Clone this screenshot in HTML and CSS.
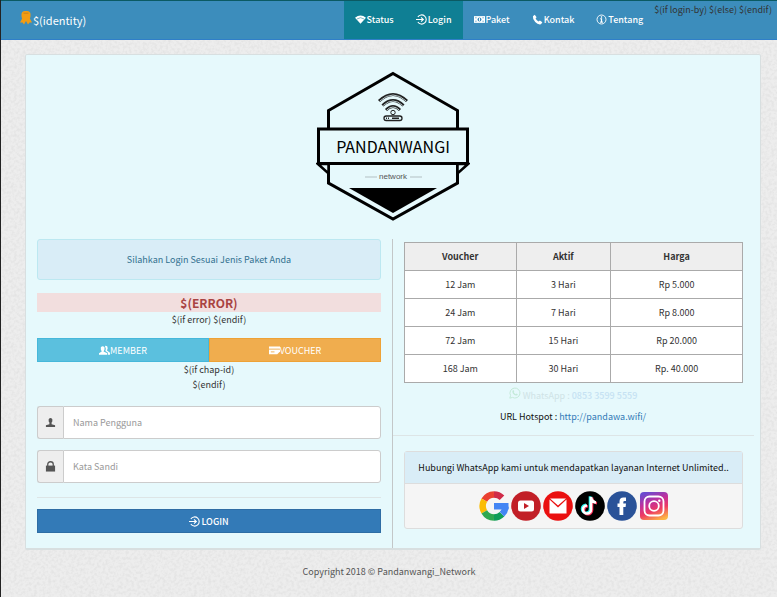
FILE: index.html
```html
<!DOCTYPE html>
<html lang="id">
<head>
<meta charset="utf-8">
<meta name="viewport" content="width=device-width, initial-scale=1">
<title>Pandanwangi Network</title>
<link rel="stylesheet" href="styles.css">
</head>
<body>
<svg class="sprite" aria-hidden="true">
  <symbol id="i-login" viewBox="0 0 12 12"><path d="M2 3.200A5 5 0 1 1 2 8.800M0 6h7.800M5.500 3.600 8 6 5.500 8.400" fill="none" stroke="currentColor" stroke-width="1.200"/></symbol>
</svg>
<header class="navbar">
  <a class="brand" href="#">
    <svg class="brand-icon" viewBox="0 0 12 14" aria-hidden="true"><path d="M3 6 0 11.500 2.500 11.500 4 13.500 6 10 8 13.500 9.500 11.500 12 11.500 9 6z" fill="#f39c12"/><rect x="1.500" y="0" width="9" height="8.500" rx="3.500" fill="#f39c12"/><path d="M3.500 2.200h5" stroke="#c9821c" stroke-width="1"/></svg>
    <span>$(identity)</span>
  </a>
  <nav class="menu">
    <a class="active" href="#"><svg class="icon" viewBox="0 0 12 12" aria-hidden="true"><path d="M0 4Q6-1 12 4L6 10.500z" fill="currentColor"/><path d="M2 5.500Q6 2.500 10 5.500" fill="none" stroke="#0f7f94" stroke-width=".6"/></svg>Status</a>
    <a class="active" href="#"><svg class="icon" aria-hidden="true"><use href="#i-login"/></svg>Login</a>
    <a href="#"><svg class="icon" viewBox="0 0 13 12" aria-hidden="true"><path d="M0 2h13v8H0z" fill="currentColor"/><circle cx="6.500" cy="6" r="2.300" fill="#3c8dbc"/><path d="M6.500 4.400v3.200" stroke="#fff" stroke-width="1.200"/><path d="M1.500 4h1.500M10 4h1.500M1.500 8h1.500M10 8h1.500" stroke="#3c8dbc"/></svg>Paket</a>
    <a href="#"><svg class="icon" viewBox="0 0 12 12" aria-hidden="true"><path d="M1 2.500 3 .8 5 3.600 3.900 5Q5 7.300 7.200 8.200L8.600 7.200 11.300 9 9.800 11.200Q6.500 12 3.500 8.700 .5 5.500 1 2.500z" fill="currentColor"/></svg>Kontak</a>
    <a href="#"><svg class="icon" viewBox="0 0 12 12" aria-hidden="true"><circle cx="6" cy="6" r="4.900" fill="none" stroke="currentColor"/><path d="M6 2.500v1.500M4.600 5.200H6v3.600M4.500 8.900h3" fill="none" stroke="currentColor" stroke-width="1.300"/></svg>Tentang</a>
  </nav>
  <span class="session">$(if login-by) $(else) $(endif)</span>
</header>

<main class="card">
  <svg class="logo" viewBox="0 0 154 152" role="img" aria-label="Pandanwangi network">
    <path d="M77 3.500 141.500 40.500V113L77 149 12.500 113V40.500z" fill="none" stroke="#000" stroke-width="3"/>
    <path d="M2 94h10.500v9.500zM152 94h-10.500v9.500z" fill="#e6f9fc" stroke="#000" stroke-width="2.500"/>
    <rect x="2.500" y="59" width="149" height="34.500" fill="#e6f9fc" stroke="#000" stroke-width="3"/>
    <path d="M33 118h88L77 143z"/>
    <g fill="none" stroke="#222" stroke-width="3"><path d="M63 31Q77 18 91 31"/><path d="M66.500 35.500Q77 25.500 87.500 35.500"/><path d="M70 40Q77 33 84 40"/></g>
    <g fill="none" stroke="#b9c8cb" stroke-width="1"><path d="M63.800 31Q77 19 90.200 31"/><path d="M67.300 35.500Q77 26.500 86.700 35.500"/><path d="M70.800 40Q77 34 83.200 40"/></g>
    <circle cx="77" cy="42.500" r="2.200" fill="#e6f9fc" stroke="#222"/>
    <rect x="68" y="46" width="18" height="4.500" rx="2.200" fill="none" stroke="#222" stroke-width="1.300"/>
    <path d="M70 48.300h1M72 48.300h1M76 48.300h7" stroke="#222" stroke-width="1.500"/>
    <text class="logo-name" x="77" y="83">PANDANWANGI</text>
    <path d="M49 107h12M94 107h12" stroke="#b3c0c3"/>
    <text class="logo-sub" x="77" y="109">network</text>
  </svg>

  <div class="columns">
    <section class="login">
      <p class="alert">Silahkan Login Sesuai Jenis Paket Anda</p>
      <h1 class="error">$(ERROR)</h1>
      <p class="note">$(if error) $(endif)</p>
      <div class="tabs">
        <button type="button" class="tab member"><svg class="icon" viewBox="0 0 12 12" aria-hidden="true"><path d="M2 2.500Q4 0 6 2.500V5L5 7l4 2v1.500H0V9l3-2-1-2z" fill="currentColor"/><path d="M6.500 1Q9.500 .5 9.500 3.500L8.700 6 12 8.500v2H9.800V8.500L7 6.500 7.500 4z" fill="currentColor"/></svg>MEMBER</button><button type="button" class="tab voucher"><svg class="icon" viewBox="0 0 12 12" aria-hidden="true"><path d="M0 1.500h12V7L9 10H0z" fill="currentColor"/><path d="M0 4.500h12M2 7.500h4" stroke="#f0ad4e"/></svg>VOUCHER</button>
      </div>
      <p class="note">$(if chap-id)<br>$(endif)</p>
      <form class="form">
        <div class="field">
          <label for="user" aria-label="Nama Pengguna"><svg class="icon" viewBox="0 0 12 12" aria-hidden="true"><path d="M4 2.500Q6-.5 8 2.500V5L7.200 6v2L11 9v2H1V9l3.800-1V6L4 5z" fill="currentColor"/></svg></label>
          <input id="user" type="text" placeholder="Nama Pengguna">
        </div>
        <div class="field">
          <label for="pass" aria-label="Kata Sandi"><svg class="icon" viewBox="0 0 12 12" aria-hidden="true"><path d="M1 5h10v6.500H1z" fill="currentColor"/><path d="M3 5.500V3.500Q3 .8 6 .8t3 2.700v2" fill="none" stroke="currentColor" stroke-width="1.400"/></svg></label>
          <input id="pass" type="password" placeholder="Kata Sandi">
        </div>
        <hr>
        <button type="submit" class="submit"><svg class="icon" aria-hidden="true"><use href="#i-login"/></svg>LOGIN</button>
      </form>
    </section>

    <section class="info">
      <table class="prices">
        <thead><tr><th class="c1">Voucher</th><th class="c2">Aktif</th><th>Harga</th></tr></thead>
        <tbody>
          <tr><td>12 Jam</td><td>3 Hari</td><td>Rp 5.000</td></tr>
          <tr><td>24 Jam</td><td>7 Hari</td><td>Rp 8.000</td></tr>
          <tr><td>72 Jam</td><td>15 Hari</td><td>Rp 20.000</td></tr>
          <tr><td>168 Jam</td><td>30 Hari</td><td>Rp. 40.000</td></tr>
        </tbody>
      </table>
      <p class="whatsapp"><svg viewBox="0 0 12 12" aria-hidden="true"><path d="M.8 11.200 1.600 8.500A5 5 0 1 1 3.500 10.400z" fill="none" stroke="#c4ead9"/><path d="M3.800 3.200 4.800 3.300 5.200 4.600 4.800 5.300Q5.500 6.700 6.800 7.200L7.500 6.500 8.800 7.200Q8.500 8.900 6.800 8.500 3.600 7.500 3.300 4.500z" fill="#c4ead9"/></svg> <span>WhatsApp : <a href="#">0853 3599 5559</a></span></p>
      <p class="url">URL Hotspot : <a href="#">http://pandawa.wifi/</a></p>
      <hr>
      <div class="panel">
        <h2>Hubungi WhatsApp kami untuk mendapatkan layanan Internet Unlimited..</h2>
        <div class="social">
          <a href="#" aria-label="Google"><svg viewBox="0 0 30 30"><g fill="none" stroke-width="6.500"><path d="M5.300 9.200A11.500 11.500 0 0 1 15 3.500" stroke="#ea4030"/><path d="M15 3.500A11.500 11.500 0 0 1 23 6.800" stroke="#d02a48"/><path d="M5.300 9.200A11.500 11.500 0 0 0 5.300 20.800" stroke="#fbbc05"/><path d="M5.300 20.800A11.500 11.500 0 0 0 15 26.500" stroke="#2fa850"/><path d="M15 26.500A11.500 11.500 0 0 0 23 23.200" stroke="#109d58"/><path d="M23 23.200A11.500 11.500 0 0 0 26.500 15.500" stroke="#4285f4"/></g><path d="M15 12h14.500v6.500H15z" fill="#4285f4"/></svg></a>
          <a href="#" aria-label="YouTube"><svg viewBox="0 0 30 30"><circle cx="15" cy="15" r="14.800" fill="#c21f27"/><rect x="7" y="9.500" width="16" height="11" rx="2.500" fill="#fff"/><path d="M13 12v6l5-3z" fill="#c21f27"/></svg></a>
          <a href="#" aria-label="Gmail"><svg viewBox="0 0 30 30"><circle cx="15" cy="15" r="14.800" fill="#ea1010"/><path d="M7 7.500h16L15 14.500zM6.500 8.500 15 16.500l8.500-8V22.500h-17z" fill="#fff"/></svg></a>
          <a href="#" aria-label="TikTok"><svg viewBox="0 0 30 30"><circle cx="15" cy="15" r="14.800"/><g fill="none" stroke-width="2.600"><path d="M16 6v12.500a4 4 0 1 1-4-4M16 6q.5 5 5 5.500" stroke="#25f4ee" transform="translate(-1 -.7)"/><path d="M16 6v12.500a4 4 0 1 1-4-4M16 6q.5 5 5 5.500" stroke="#fe2c55" transform="translate(1 .7)"/><path d="M16 6v12.500a4 4 0 1 1-4-4M16 6q.5 5 5 5.500" stroke="#fff"/></g></svg></a>
          <a href="#" aria-label="Facebook"><svg viewBox="0 0 30 30"><circle cx="15" cy="15" r="14.800" fill="#2a5298"/><path d="M12.500 24V16H10.500V12.500h2V10.500Q12.500 6.500 16.500 6.500H19V10h-1.500Q16.300 10 16.300 11.300v1.200H19L18.600 16h-2.300v8z" fill="#fff"/></svg></a>
          <a href="#" aria-label="Instagram"><svg viewBox="0 0 30 30"><defs><linearGradient id="ig" x1=".3" y1="0" x2=".7" y2="1"><stop offset="0" stop-color="#6a4bd0"/><stop offset=".35" stop-color="#c0309c"/><stop offset=".65" stop-color="#ee3a62"/><stop offset="1" stop-color="#fdb544"/></linearGradient></defs><rect x="1" y="1" width="28" height="28" rx="4" fill="url(#ig)"/><g fill="none" stroke="#fff" stroke-width="1.800"><rect x="5.500" y="5.500" width="19" height="19" rx="5"/><circle cx="15" cy="15" r="4.800"/></g><circle cx="20.300" cy="9.700" r="1.200" fill="#fff"/></svg></a>
        </div>
      </div>
    </section>
  </div>
</main>
<footer>Copyright 2018 © Pandanwangi_Network</footer>
</body>
</html>
```

FILE: styles.css
```css
* { box-sizing: border-box; }
body {
  margin: 0;
  min-height: 100vh;
  border-left: 1px solid #222;
  font: 9px/15px "Noto Sans CJK SC", "Noto Sans", sans-serif;
  color: #333;
  background: #ededed url("data:image/svg+xml,%3Csvg xmlns='http://www.w3.org/2000/svg' width='160' height='160'%3E%3Cfilter id='n'%3E%3CfeTurbulence type='fractalNoise' baseFrequency='.35' numOctaves='2' stitchTiles='stitch'/%3E%3CfeColorMatrix values='0 0 0 0 0 0 0 0 0 0 0 0 0 0 0 .1 0 0 0 -.04'/%3E%3C/filter%3E%3Crect width='160' height='160' filter='url(%23n)'/%3E%3C/svg%3E");
}
p, h1, h2 { margin: 0; }
a { color: #337ab7; text-decoration: none; }
button, input { font: inherit; }
hr { border: 0; border-top: 1px solid #dde5e6; margin: 0; }
.sprite { position: absolute; width: 0; height: 0; }
.icon { width: 11px; height: 11px; flex: none; }

.navbar {
  display: flex;
  height: 40px;
  border-top: 1px solid #0b5a63;
  border-bottom: 1px solid #2f7fc9;
  background: #3c8dbc;
}
.brand {
  display: flex;
  align-items: center;
  gap: 1px;
  margin-right: auto;
  padding-left: 19px;
  font-size: 11px;
  color: #fff;
}
.brand-icon { width: 12px; height: 14px; margin-bottom: 4px; }
.menu { display: flex; }
.menu a {
  display: flex;
  align-items: center;
  padding: 0 11px 2px;
  gap: 1px;
  color: #fff;
  font-weight: 500;
}
.menu .active { background: #0f7f94; }
.session { padding: 1px 5px 0 0; }

.card {
  margin: 14px 16px 0 24px;
  padding-top: 15px;
  border: 1px solid #d8dfe0;
  border-bottom-width: 2px;
  border-radius: 2px;
  background: #e6f9fc;
}
.logo { display: block; width: 154px; height: 152px; margin: 0 auto 17px; }
.logo-name { font: 16px "Noto Sans CJK SC", sans-serif; text-anchor: middle; }
.logo-sub { font: 8px "Liberation Sans", sans-serif; text-anchor: middle; fill: #555; }

.columns { display: grid; grid-template-columns: 1fr 1fr; margin-right: 2px; }
.login { padding: 0 11px 15px; text-align: center; }
.alert {
  padding: 12px;
  border: 1px solid #bce8f1;
  border-radius: 3px;
  background: #d9edf7;
  color: #31708f;
}
.error {
  margin-top: 13px;
  background: #f2dede;
  color: #a94442;
  font-size: 12px;
  line-height: 19px;
}
.tabs { display: flex; margin-top: 11px; }
.tab, .submit {
  display: flex;
  flex: 1;
  align-items: center;
  justify-content: center;
  height: 24px;
  padding: 0;
  border: 1px solid;
  color: #fff;
}
.member { background: #5bc0de; border-color: #46b8da; }
.voucher { background: #f0ad4e; border-color: #eea236; }
.form { margin-top: 14px; }
.field { display: flex; height: 33px; margin-bottom: 11px; }
.field label {
  display: flex;
  align-items: center;
  justify-content: center;
  width: 26px;
  border: 1px solid #ccc;
  border-right: 0;
  border-radius: 3px 0 0 3px;
  background: #eee;
  color: #555;
}
.field input {
  flex: 1;
  min-width: 0;
  padding: 0 9px;
  border: 1px solid #ccc;
  border-radius: 0 3px 3px 0;
  background: #fff;
}
.field input::placeholder { color: #999; }
.form hr { margin: 14px 0 11px; }
.submit { width: 100%; gap: 1px; background: #337ab7; border-color: #2e6da4; font-weight: 500; }

.info { border-left: 1px solid #c3c7c8; padding-top: 3px; text-align: center; }
.prices {
  width: calc(100% - 26px);
  margin-left: 11px;
  border-collapse: collapse;
  table-layout: fixed;
  background: #fff;
}
.prices th, .prices td { height: 28px; padding: 0; border: 1px solid #aaa; }
.prices th { background: #eee; font-weight: 700; }
.c1 { width: 33%; }
.c2 { width: 28%; }
.whatsapp, .url { padding: 0 16px 0 11px; }
.whatsapp { margin-top: 4px; color: #cfe3e6; }
.whatsapp a { color: #c5e2f3; font-weight: 500; }
.whatsapp svg { width: 12px; height: 12px; }
.url { margin: 6px 0 11px; color: #111; }
.info hr { margin-right: 4px; }
.panel {
  margin: 15px 15px 0 11px;
  border: 1px solid #ddd;
  border-radius: 3px;
  background: #f5f5f5;
}
.panel h2 {
  padding: 8px 0;
  border-bottom: 1px solid #ddd;
  background: #d9edf7;
  color: #111;
  font-size: 9px;
  font-weight: 400;
  line-height: 15px;
}
.social { display: flex; justify-content: center; gap: 2px; padding: 7px 0; }
.social svg { display: block; width: 30px; height: 30px; }
footer { margin: 14px 0; text-align: center; color: #555; }
```
